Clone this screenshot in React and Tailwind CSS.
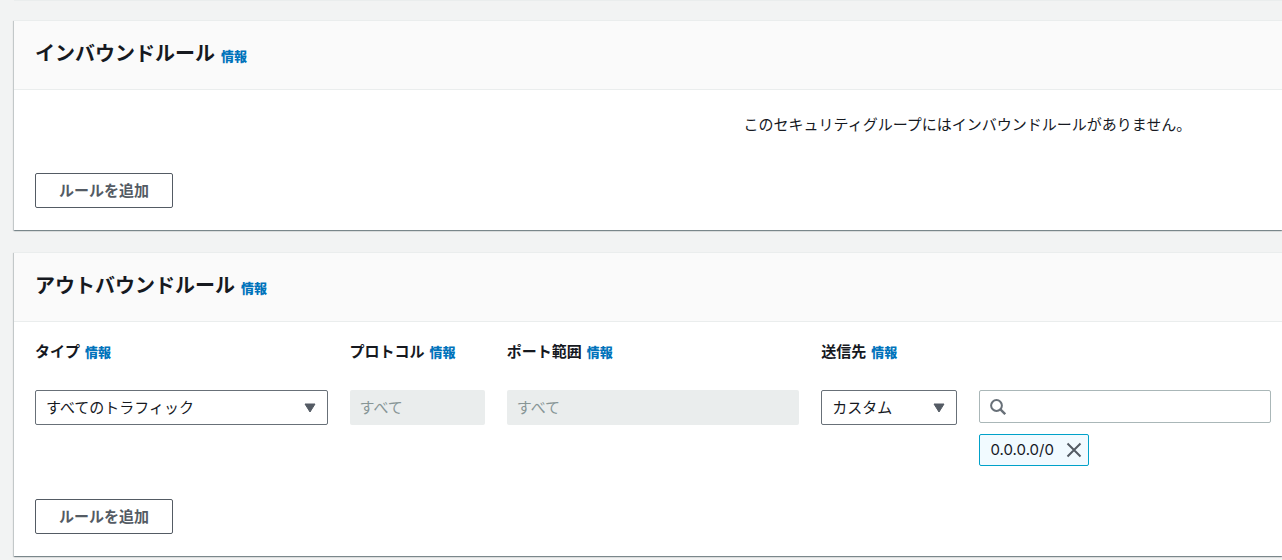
import React, { useState } from 'react';

const panelShadow =
  'shadow-[0_1px_1px_0_rgba(0,28,36,0.3),1px_1px_1px_0_rgba(0,28,36,0.15),-1px_1px_1px_0_rgba(0,28,36,0.15)]';

const InfoLink = () => (
  <a href="#info" className="text-[13px] font-black text-[#0073bb] hover:underline">
    情報
  </a>
);

const Panel = ({ title, children }) => (
  <section className={`border-t border-[#eaeded] bg-white ${panelShadow}`}>
    <header className="flex items-baseline gap-[6px] border-b border-[#eaeded] bg-[#fafafa] px-[21px] pt-[18px] pb-[22px]">
      <h2 className="text-xl leading-7 font-bold">{title}</h2>
      <InfoLink />
    </header>
    {children}
  </section>
);

const FieldLabel = ({ htmlFor, children }) => (
  <div className="mb-7 flex h-[22px] items-baseline gap-[5px] leading-[22px]">
    <label htmlFor={htmlFor} className="font-bold">
      {children}
    </label>
    <InfoLink />
  </div>
);

const Select = ({ id, value }) => (
  <div className="relative">
    <select
      id={id}
      defaultValue={value}
      className="h-[35px] w-full appearance-none rounded-xs border border-[#687078] bg-white px-[10px] pb-[2px]"
    >
      <option>{value}</option>
    </select>
    <svg
      viewBox="0 0 12 10"
      className="pointer-events-none absolute top-[13px] right-3 h-[10px] w-3"
      fill="#545b64"
      stroke="#545b64"
      strokeLinejoin="round"
    >
      <path d="M1 1h10L6 9z" />
    </svg>
  </div>
);

const DisabledInput = ({ id, value }) => (
  <input
    id={id}
    type="text"
    value={value}
    disabled
    readOnly
    className="block h-[35px] w-full rounded-xs bg-[#eaeded] px-[10px] pb-[2px] text-[#879596]"
  />
);

const AddRuleButton = () => (
  <button
    type="button"
    className="h-[35px] rounded-xs border border-[#545b64] bg-white px-[23px] pb-[2px] font-bold text-[#545b64] hover:bg-[#fafafa]"
  >
    ルールを追加
  </button>
);

const App = () => {
  const [cidrs, setCidrs] = useState(['0.0.0.0/0']);

  return (
    <main
      lang="ja"
      className="min-h-screen bg-[#f2f3f3] pl-[14px] font-['Noto_Sans_CJK_JP',sans-serif] text-[15px] leading-[22px] text-[#16191f]"
    >
      <div className="mb-[19px] h-px bg-[#eaeded]" />

      <div className="flex flex-col gap-[22px]">
        <Panel title="インバウンドルール">
          <div className="pt-[23px] pr-[11px] pb-[22px] pl-[21px]">
            <div className="mb-[38px] grid grid-cols-8 gap-x-[22px]">
              <p className="col-span-4 col-start-5 text-center whitespace-nowrap">
                このセキュリティグループにはインバウンドルールがありません。
              </p>
            </div>
            <AddRuleButton />
          </div>
        </Panel>

        <Panel title="アウトバウンドルール">
          <div className="pt-[18px] pr-[11px] pb-[22px] pl-[21px]">
            <div className="mb-[33px] grid grid-cols-8 gap-x-[22px]">
              <div className="col-span-2">
                <FieldLabel htmlFor="type">タイプ</FieldLabel>
                <Select id="type" value="すべてのトラフィック" />
              </div>
              <div>
                <FieldLabel htmlFor="protocol">プロトコル</FieldLabel>
                <DisabledInput id="protocol" value="すべて" />
              </div>
              <div className="col-span-2">
                <FieldLabel htmlFor="port">ポート範囲</FieldLabel>
                <DisabledInput id="port" value="すべて" />
              </div>
              <div>
                <FieldLabel htmlFor="destination">送信先</FieldLabel>
                <Select id="destination" value="カスタム" />
              </div>
              <div className="col-span-2 pt-[50px]">
                <div className="relative mb-[11px]">
                  <svg
                    viewBox="0 0 16 16"
                    className="pointer-events-none absolute top-[9px] left-[11px] size-4"
                    fill="none"
                    stroke="#687078"
                    strokeWidth="2"
                  >
                    <circle cx="6.5" cy="6.5" r="5.4" />
                    <path d="M10.4 10.4l4.8 4.8" strokeWidth="2.4" />
                  </svg>
                  <input
                    type="search"
                    aria-label="送信先"
                    className="block h-[33px] w-full rounded-xs border border-[#aab7b8] bg-white pr-[10px] pl-9"
                  />
                </div>
                {cidrs.map((cidr) => (
                  <span
                    key={cidr}
                    className="flex h-8 w-fit items-center gap-3 rounded-xs border border-[#00a1c9] bg-[#f1faff] pr-[6px] pl-[11px] font-[Inter,sans-serif]"
                  >
                    {cidr}
                    <button
                      type="button"
                      aria-label={cidr}
                      onClick={() => setCidrs(cidrs.filter((c) => c !== cidr))}
                    >
                      <svg viewBox="0 0 16 16" className="size-4" stroke="#545b64" strokeWidth="2">
                        <path d="M1.5 1.5l13 13M14.5 1.5l-13 13" />
                      </svg>
                    </button>
                  </span>
                ))}
              </div>
            </div>
            <AddRuleButton />
          </div>
        </Panel>
      </div>
    </main>
  );
};

export default App;
